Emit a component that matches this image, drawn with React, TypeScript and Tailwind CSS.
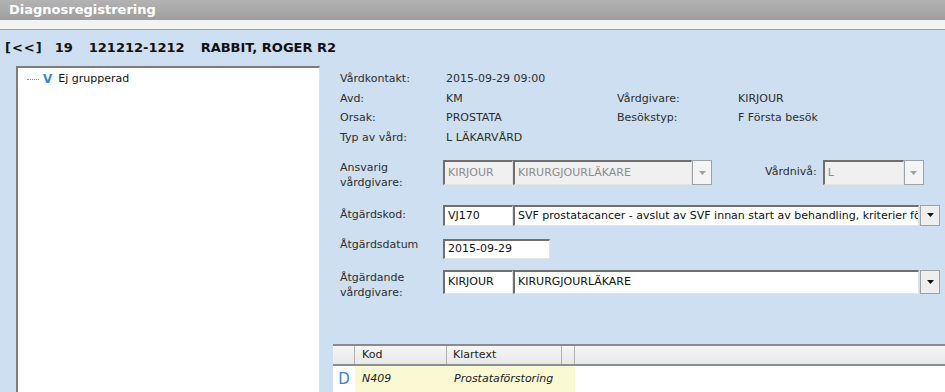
const font = { fontFamily: '"DejaVu Sans", sans-serif' };

function Arrow({ disabled }: { disabled?: boolean }) {
  return (
    <div
      className={`flex h-full w-[20px] shrink-0 items-center justify-center border border-[#9aa2aa] ${
        disabled ? 'bg-[#f4f4f4]' : 'bg-[#eeeeee]'
      }`}
    >
      <svg width="7" height="4" viewBox="0 0 7 4">
        <path d="M0 0h7L3.5 4z" fill={disabled ? '#a0a0a0' : '#111'} />
      </svg>
    </div>
  );
}

function Box({
  children,
  className = '',
  disabled,
}: {
  children?: React.ReactNode;
  className?: string;
  disabled?: boolean;
}) {
  return (
    <div
      className={`flex h-full items-center overflow-hidden whitespace-nowrap border-t-2 border-l-2 border-b border-r border-t-[#6f6f6f] border-l-[#6f6f6f] border-b-[#e4e4e4] border-r-[#e4e4e4] pl-[3px] ${
        disabled ? 'bg-[#f0f0f0] text-[#8c8c8c]' : 'bg-white text-[#111]'
      } ${className}`}
    >
      {children}
    </div>
  );
}

function Info({ label, value }: { label: string; value: string }) {
  return (
    <>
      <span>{label}</span>
      <span>{value}</span>
    </>
  );
}

export default function App() {
  return (
    <div
      className="flex h-[392px] w-[945px] flex-col overflow-hidden bg-[#cddff0] text-[11px] text-[#2e2e2e]"
      style={font}
    >
      <div className="flex h-[20px] shrink-0 items-center bg-gradient-to-b from-[#b3b3b3] to-[#9e9e9e] pl-[9px] text-[13px] font-bold text-white">
        Diagnosregistrering
      </div>
      <div className="h-[10px] shrink-0 border-b border-[#9aa3ac] bg-[#f3f3f3]" />
      <div className="flex h-[36px] shrink-0 items-start gap-[12px] pt-[8px] pl-[5px] text-[13px] font-bold text-[#111]">
        <span className="tracking-[1px]">[&lt;&lt;]</span>
        <span>19</span>
        <span className="ml-[4px]">121212-1212</span>
        <span className="ml-[4px]">RABBIT, ROGER R2</span>
      </div>

      <div className="flex min-h-0 flex-1">
        <div className="ml-[16px] w-[304px] shrink-0 border-t-2 border-l-2 border-t-[#7d7d7d] border-l-[#7d7d7d] border-r border-r-[#e0e0e0] bg-white pt-[2px] pl-[9px]">
          <div className="flex items-center text-[#111]">
            <span className="w-[12px] border-t border-dotted border-[#9a9a9a]" />
            <span className="ml-[4px] text-[12px] font-bold text-[#3a86c8]">V</span>
            <span className="ml-[6px]">Ej grupperad</span>
          </div>
        </div>

        <div className="flex min-w-0 flex-1 flex-col">
          <div className="ml-[20px] mt-[3px] grid grid-cols-[106px_171px_121px_1fr] leading-[19.5px]">
            <Info label="Vårdkontakt:" value="2015-09-29 09:00" />
            <span />
            <span />
            <Info label="Avd:" value="KM" />
            <Info label="Vårdgivare:" value="KIRJOUR" />
            <Info label="Orsak:" value="PROSTATA" />
            <Info label="Besökstyp:" value="F Första besök" />
            <Info label="Typ av vård:" value="L LÄKARVÅRD" />
          </div>

          <div className="ml-[20px] mt-[13px] flex h-[25px]">
            <div className="w-[103px] leading-[15px]">
              Ansvarig
              <br />
              vårdgivare:
            </div>
            <Box disabled className="w-[70px]">KIRJOUR</Box>
            <Box disabled className="w-[179px]">KIRURGJOURLÄKARE</Box>
            <Arrow disabled />
            <span className="ml-[53px] self-center">Vårdnivå:</span>
            <div className="ml-[6px] flex w-[101px]">
              <Box disabled className="flex-1">L</Box>
              <Arrow disabled />
            </div>
          </div>

          <div className="ml-[20px] mt-[20px] flex h-[23px] items-center">
            <div className="w-[103px]">Åtgärdskod:</div>
            <Box className="w-[406px] min-w-[70px] max-w-[70px]">VJ170</Box>
            <Box className="w-[406px]">
              SVF prostatacancer - avslut av SVF innan start av behandling, kriterier för
            </Box>
            <div className="ml-[1px] h-full">
              <Arrow />
            </div>
          </div>

          <div className="ml-[20px] mt-[13px] flex h-[23px]">
            <div className="w-[103px] leading-[12px]">Åtgärdsdatum</div>
            <Box className="w-[107px]">2015-09-29</Box>
          </div>

          <div className="ml-[20px] mt-[11px] flex h-[24px]">
            <div className="w-[103px] leading-[15px]">
              Åtgärdande
              <br />
              vårdgivare:
            </div>
            <Box className="w-[70px]">KIRJOUR</Box>
            <Box className="w-[406px]">KIRURGJOURLÄKARE</Box>
            <div className="ml-[1px] h-full">
              <Arrow />
            </div>
          </div>

          <div className="ml-[13px] mt-[50px] flex flex-1 flex-col border-t-2 border-[#868c92] bg-white">
            <div className="flex h-[20px] shrink-0 border-b-2 border-[#8a8f94] bg-gradient-to-b from-[#f6f6f6] to-[#e8e8e8] text-[#222]">
              <div className="w-[22px] border-r border-[#b0b0b0]" />
              <div className="flex w-[92px] items-center border-r border-[#b0b0b0] pl-[7px]">Kod</div>
              <div className="flex w-[115px] items-center border-r border-[#b0b0b0] pl-[6px]">Klartext</div>
              <div className="w-[13px] border-r border-[#b0b0b0]" />
              <div className="flex-1" />
            </div>
            <div className="flex h-[26px] items-center">
              <div className="flex h-full w-[22px] items-center justify-center text-[15px] text-[#3a86c8]">D</div>
              <div className="flex h-full w-[220px] items-center bg-[#fbf8d4] italic text-[#222]">
                <span className="w-[92px] pl-[7px]">N409</span>
                <span className="pl-[7px]">Prostataförstoring</span>
              </div>
            </div>
          </div>
        </div>
      </div>
    </div>
  );
}
